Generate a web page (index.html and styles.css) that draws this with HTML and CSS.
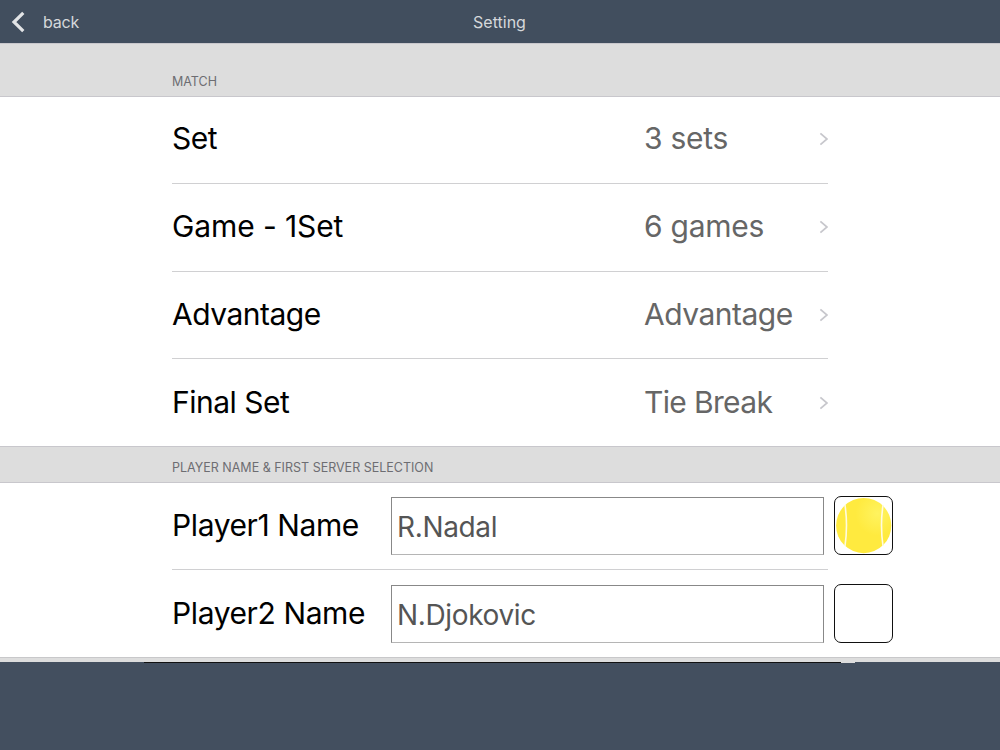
FILE: index.html
```
<!DOCTYPE html>
<html lang="en">
<head>
  <meta charset="UTF-8">
  <title>Setting</title>
  <link rel="stylesheet" href="styles.css">
</head>
<body>
  <header class="navbar">
    <button type="button" class="back">
      <svg class="back-icon" width="14" height="22" viewBox="0 0 14 22"><path d="M12.3 1.8 L3 11 L12.3 20.2" fill="none" stroke="#e2e4e6" stroke-width="3.2"/></svg>
      <span>back</span>
    </button>
    <h1 class="title">Setting</h1>
  </header>

  <h2 class="section-title first"><span>MATCH</span></h2>
  <div class="group match">
    <div class="row">
      <span class="label">Set</span>
      <span class="value games">3 sets</span>
      <svg class="arrow" width="9" height="14" viewBox="0 0 9 14"><path d="M1.4 1.4 L8 7 L1.4 12.6"/></svg>
    </div>
    <div class="row">
      <span class="label game">Game - 1Set</span>
      <span class="value games">6 games</span>
      <svg class="arrow" width="9" height="14" viewBox="0 0 9 14"><path d="M1.4 1.4 L8 7 L1.4 12.6"/></svg>
    </div>
    <div class="row">
      <span class="label">Advantage</span>
      <span class="value">Advantage</span>
      <svg class="arrow" width="9" height="14" viewBox="0 0 9 14"><path d="M1.4 1.4 L8 7 L1.4 12.6"/></svg>
    </div>
    <div class="row">
      <span class="label">Final Set</span>
      <span class="value tie">Tie Break</span>
      <svg class="arrow" width="9" height="14" viewBox="0 0 9 14"><path d="M1.4 1.4 L8 7 L1.4 12.6"/></svg>
    </div>
  </div>

  <h2 class="section-title second"><span>PLAYER NAME &amp; FIRST SERVER SELECTION</span></h2>
  <div class="group players">
    <div class="row">
      <label class="label" for="player1">Player1 Name</label>
      <input type="text" class="name" id="player1" value="R.Nadal">
      <button type="button" class="server">
        <svg width="57" height="57" viewBox="0 0 57 57">
          <defs>
            <radialGradient id="ball" cx="0.75" cy="0.28" r="0.4">
              <stop offset="0" stop-color="#fff35f"/>
              <stop offset="1" stop-color="#ffea3f"/>
            </radialGradient>
          </defs>
          <circle cx="28.7" cy="28.6" r="27.6" fill="url(#ball)"/>
          <path d="M10 8 Q13 28 10 49 M48 8 Q45 28 48 49" fill="none" stroke="#fffbe0" stroke-width="1.6"/>
        </svg>
      </button>
    </div>
    <div class="row">
      <label class="label" for="player2">Player2 Name</label>
      <input type="text" class="name" id="player2" value="N.Djokovic">
      <button type="button" class="server"></button>
    </div>
  </div>
  <div class="group-end"></div>
  <footer class="footer"><div class="edge"></div></footer>
</body>
</html>
```
FILE: styles.css
```
* {
  box-sizing: border-box;
}
body {
  margin: 0;
  height: 750px;
  display: flex;
  flex-direction: column;
  overflow: hidden;
  background: #fff;
  font-family: Inter, 'Liberation Sans', sans-serif;
}
button {
  padding: 0;
  border: none;
  background: none;
  font-family: inherit;
}
.navbar {
  display: grid;
  grid-template-columns: 1fr auto 1fr;
  align-items: center;
  height: 43px;
  padding-right: 1px;
  background: #414e5e;
  color: #d5d8db;
}
.back {
  display: flex;
  align-items: center;
  gap: 18px;
  padding-left: 11px;
  color: inherit;
  font-size: 16px;
  letter-spacing: -0.2px;
}
.title {
  margin: 0;
  font-size: 16px;
  font-weight: 400;
}
.section-title {
  display: flex;
  align-items: flex-end;
  flex: none;
  margin: 0;
  padding: 0 172px 7px;
  border-top: 1px solid #c8c7cc;
  border-bottom: 1px solid #c8c7cc;
  background: #ddd;
  color: #6d6d72;
  font-size: 12.5px;
  font-weight: 400;
  line-height: 14px;
}
.first {
  height: 54px;
}
.second {
  height: 37px;
}
.group {
  padding: 0 172px;
}
.row {
  display: flex;
  align-items: center;
  height: 87px;
  padding-bottom: 1px;
  border-bottom: 1px solid #d0d0d2;
}
.match .row:first-child {
  padding-bottom: 3px;
}
.match .row:nth-child(2) {
  height: 88px;
}
.row:last-child {
  padding-bottom: 0;
  border-bottom: none;
}
.label {
  width: 472px;
  flex: none;
  padding-bottom: 2px;
  color: #000;
  font-size: 30px;
  letter-spacing: -0.5px;
  line-height: 40px;
  white-space: nowrap;
}
.game {
  letter-spacing: -0.1px;
}
.value {
  flex: 1;
  padding-bottom: 2px;
  color: #666;
  font-size: 30px;
  letter-spacing: -0.5px;
  line-height: 40px;
  white-space: nowrap;
}
.games {
  letter-spacing: -0.25px;
}
.tie {
  letter-spacing: -0.65px;
}
.arrow {
  flex: none;
  fill: none;
  stroke: #c7c7cc;
  stroke-width: 1.8;
}
.players .label {
  width: 219px;
  letter-spacing: -0.4px;
}
.name {
  flex: none;
  width: 433px;
  height: 58px;
  margin-right: 10px;
  padding: 3px 0 0 5px;
  border: 1px solid #888;
  border-bottom-color: #b5b5b5;
  border-radius: 0;
  background: #fff;
  color: #555;
  font-family: inherit;
  font-size: 28px;
  letter-spacing: -0.35px;
}
.server {
  flex: none;
  width: 59px;
  height: 59px;
  border: 1px solid #111;
  border-radius: 7px;
}
.server svg {
  display: block;
}
.group-end {
  height: 5px;
  border-top: 1px solid #c8c8ca;
  background: #ddd;
}
.footer {
  flex: 1;
  background: #434f5f;
}
.edge {
  width: 711px;
  height: 1px;
  margin-left: 144px;
  border-right: 14px solid #ddd;
  background: #111;
}
```
